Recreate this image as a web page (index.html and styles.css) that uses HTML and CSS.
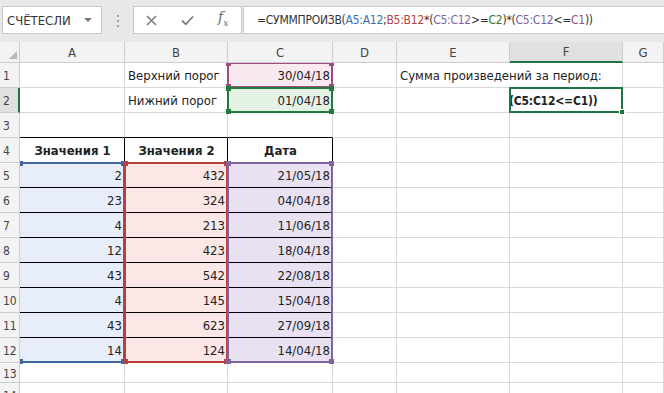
FILE: index.html
```html
<!DOCTYPE html>
<html lang="ru">
<head>
  <meta charset="UTF-8" />
  <meta name="viewport" content="width=device-width, initial-scale=1" />
  <title>СУММПРОИЗВ за период</title>
  <link rel="stylesheet" href="styles.css">
</head>
<body>

<div class="toolbar">
  <div class="namebox">СЧЁТЕСЛИ<span class="caret"></span></div>
  <div class="grip"><i></i><i></i><i></i></div>
  <div class="fxbox">
    <svg width="11" height="11" viewBox="0 0 11 11"><path d="M1 1L10 10M10 1L1 10" stroke="#7a7a7a" stroke-width="1.5" fill="none"/></svg>
    <svg width="13" height="11" viewBox="0 0 13 11"><path d="M1 5.5L4.8 9.3L12 1.5" stroke="#7a7a7a" stroke-width="1.8" fill="none"/></svg>
    <span class="fx">f<sub>x</sub></span>
  </div>
  <div class="formula">=СУММПРОИЗВ(<span class="t-blue">A5:A12</span>;<span class="t-red">B5:B12</span>*(<span class="t-purple">C5:C12</span>&gt;=<span class="t-green">C2</span>)*(<span class="t-purple">C5:C12</span>&lt;=<span class="t-pink">C1</span>))</div>
</div>

<div class="sheet" id="sheet">
  <div class="range rng-c1"><i class="tl"></i><i class="tr"></i><i class="bl"></i><i class="br"></i></div>
  <div class="range rng-c2"><i class="tl"></i><i class="tr"></i><i class="bl"></i><i class="br"></i></div>
  <div class="range rng-a"><i class="tl"></i><i class="tr"></i><i class="bl"></i><i class="br"></i></div>
  <div class="range rng-b"><i class="tl"></i><i class="tr"></i><i class="bl"></i><i class="br"></i></div>
  <div class="range rng-c"><i class="tl"></i><i class="tr"></i><i class="bl"></i><i class="br"></i></div>
  <div class="range active"><i class="br"></i></div>
</div>

<script>
  // Данные листа
  const cols = ['', 'A', 'B', 'C', 'D', 'E', 'F', 'G'];
  const cells = {
    B1: 'Верхний порог', C1: '30/04/18', E1: 'Сумма произведений за период:',
    B2: 'Нижний порог', C2: '01/04/18', F2: '(C5:C12<=C1))',
    A4: 'Значения 1', B4: 'Значения 2', C4: 'Дата'
  };
  const vals1 = [2, 23, 4, 12, 43, 4, 43, 14];
  const vals2 = [432, 324, 213, 423, 542, 145, 623, 124];
  const dates = ['21/05/18', '04/04/18', '11/06/18', '18/04/18', '22/08/18', '15/04/18', '27/09/18', '14/04/18'];
  vals1.forEach((v, i) => {
    cells['A' + (i + 5)] = v;
    cells['B' + (i + 5)] = vals2[i];
    cells['C' + (i + 5)] = dates[i];
  });

  const fills = { A: 'f-blue', B: 'f-red', C: 'f-purple' };
  const sheet = document.getElementById('sheet');

  for (let r = 0; r <= 14; r++) {
    for (let c = 0; c < cols.length; c++) {
      const div = document.createElement('div');
      div.className = 'cell';
      div.style.gridRow = r + 1;
      div.style.gridColumn = c + 1;
      const col = cols[c];
      const ref = col + r;

      if (r === 0 && c === 0) {
        div.classList.add('corner');
      } else if (r === 0) {
        div.classList.add('ch');
        div.textContent = col;
        if (col === 'F') div.classList.add('sel');
      } else if (c === 0) {
        div.classList.add('rh');
        div.textContent = r;
        if (r === 2) div.classList.add('sel');
      } else {
        if (cells[ref] !== undefined) div.textContent = cells[ref];
        if (ref === 'C1' || ref === 'C2' || (r >= 5 && r <= 12 && c <= 3)) div.classList.add('num');
        if (ref === 'C1') div.classList.add('f-pink');
        if (ref === 'C2') div.classList.add('f-green');
        if (r >= 5 && r <= 12 && fills[col]) div.classList.add(fills[col]);
        if (r === 3 && c <= 3) div.classList.add('tb-top');
        if (r >= 4 && r <= 12 && c <= 3) div.classList.add('tb');
        if (r === 4 && c <= 3) div.classList.add('hd');
        if (ref === 'E1') div.classList.add('spill');
        if (ref === 'F2') div.classList.add('edit');
      }
      sheet.appendChild(div);
    }
  }
</script>

</body>
</html>
```

FILE: styles.css
```css
body {
  margin: 0;
  font-family: "DejaVu Sans Condensed", "DejaVu Sans", sans-serif;
  background: #fff;
  color: #222;
  overflow: hidden;
}
.toolbar {
  height: 42px;
  box-sizing: border-box;
  padding-top: 6px;
  background: #e8e8e8;
  display: flex;
  align-items: flex-start;
}
.namebox {
  margin-left: 2px;
  width: 100px;
  height: 28px;
  box-sizing: border-box;
  background: #fff;
  border: 1px solid #c8c8c8;
  padding-left: 4px;
  display: flex;
  align-items: center;
  font-size: 13px;
  color: #333;
}
.caret {
  margin-left: auto;
  margin-right: 9px;
  border-left: 4px solid transparent;
  border-right: 4px solid transparent;
  border-top: 4px solid #7a7a7a;
}
.grip {
  width: 31px;
  padding-top: 9px;
  display: flex;
  flex-direction: column;
  align-items: center;
  gap: 3px;
}
.grip i {
  width: 2px;
  height: 2px;
  background: #a0a0a0;
}
.fxbox {
  width: 109px;
  height: 28px;
  box-sizing: border-box;
  background: #fff;
  border: 1px solid #c8c8c8;
  padding-left: 12px;
  display: flex;
  align-items: center;
  gap: 24px;
}
.fx {
  font-family: "DejaVu Serif", serif;
  font-style: italic;
  font-size: 14px;
  color: #666;
  margin-top: -3px;
}
.fx sub {
  font-size: 9px;
}
.formula {
  flex: 1;
  margin-left: 1px;
  height: 28px;
  box-sizing: border-box;
  background: #fff;
  border: 1px solid #c8c8c8;
  border-right: none;
  padding-left: 13px;
  font-size: 12px;
  letter-spacing: -0.25px;
  line-height: 26px;
  color: #333;
  white-space: nowrap;
}
.t-blue { color: #3c6cb0; }
.t-red { color: #b5403d; }
.t-purple { color: #7d62a3; }
.t-green { color: #2a7a3d; }
.t-pink { color: #9c4c7e; }

.sheet {
  display: grid;
  grid-template-columns: 20px 105px 103px 105px 64px 113px 113px 1fr;
  grid-template-rows: 21px repeat(12, 25px) 20px 25px;
  height: 351px;
  overflow: hidden;
}
.cell {
  box-sizing: border-box;
  border-right: 1px solid #d9d9d9;
  border-bottom: 1px solid #d9d9d9;
  padding: 0 2px 4px 3px;
  display: flex;
  align-items: flex-end;
  font-size: 13px;
  white-space: nowrap;
  min-width: 0;
}
.corner, .ch, .rh {
  background: #f3f3f3;
  border-color: #cdcdcd;
  color: #444;
  z-index: 3;
}
.corner {
  position: relative;
}
.corner::after {
  content: "";
  position: absolute;
  right: 2px;
  bottom: 3px;
  border-left: 8px solid transparent;
  border-bottom: 8px solid #b9b9b9;
}
.ch {
  justify-content: center;
  align-items: center;
  padding: 0;
}
.ch.sel {
  background: #e0e0e0;
  border-bottom: 2px solid #217346;
}
.rh {
  align-items: center;
  padding: 2px 0 0 3px;
  font-size: 12px;
}
.rh.sel {
  background: #e0e0e0;
  border-right: 2px solid #217346;
}
.num {
  justify-content: flex-end;
}
.hd {
  justify-content: center;
  font-weight: bold;
}
.spill {
  border-right-color: transparent;
}
.edit {
  overflow: hidden;
  font-weight: bold;
  font-size: 12px;
  letter-spacing: -0.2px;
  padding-left: 0;
  text-indent: -1px;
}
.tb-top {
  border-bottom-color: #000;
}
.tb {
  border-right-color: #000;
  border-bottom-color: #000;
}
.f-blue { background: #e8eef9; }
.f-red { background: #fce7e7; }
.f-purple { background: #e7e1f1; }
.f-pink { background: #fbe9f1; }
.f-green { background: #e4f2e6; }

/* рамки диапазонов формулы */
.range {
  position: relative;
  z-index: 2;
  margin: -1px 0 0 -1px;
  border: 2px solid currentColor;
}
.range i {
  position: absolute;
  width: 5px;
  height: 5px;
  background: currentColor;
}
.range .tl { top: -3px; left: -3px; }
.range .tr { top: -3px; right: -3px; }
.range .bl { bottom: -3px; left: -3px; }
.range .br { bottom: -3px; right: -3px; }
.rng-c1 { grid-column: 4; grid-row: 2; color: #a04a80; }
.rng-c2 { grid-column: 4; grid-row: 3; color: #1f7a3d; }
.rng-a {
  grid-column: 2;
  grid-row: 6 / 14;
  color: #41699f;
  margin-left: 0;
  border-left: none;
}
.rng-a .tl, .rng-a .bl { left: -2px; }
.rng-b { grid-column: 3; grid-row: 6 / 14; color: #b8413e; }
.rng-c { grid-column: 4; grid-row: 6 / 14; color: #8064a2; }
.active {
  grid-column: 7;
  grid-row: 3;
  color: #217346;
}
.active .br {
  width: 4px;
  height: 4px;
  border: 1px solid #fff;
  bottom: -4px;
  right: -4px;
}
```
